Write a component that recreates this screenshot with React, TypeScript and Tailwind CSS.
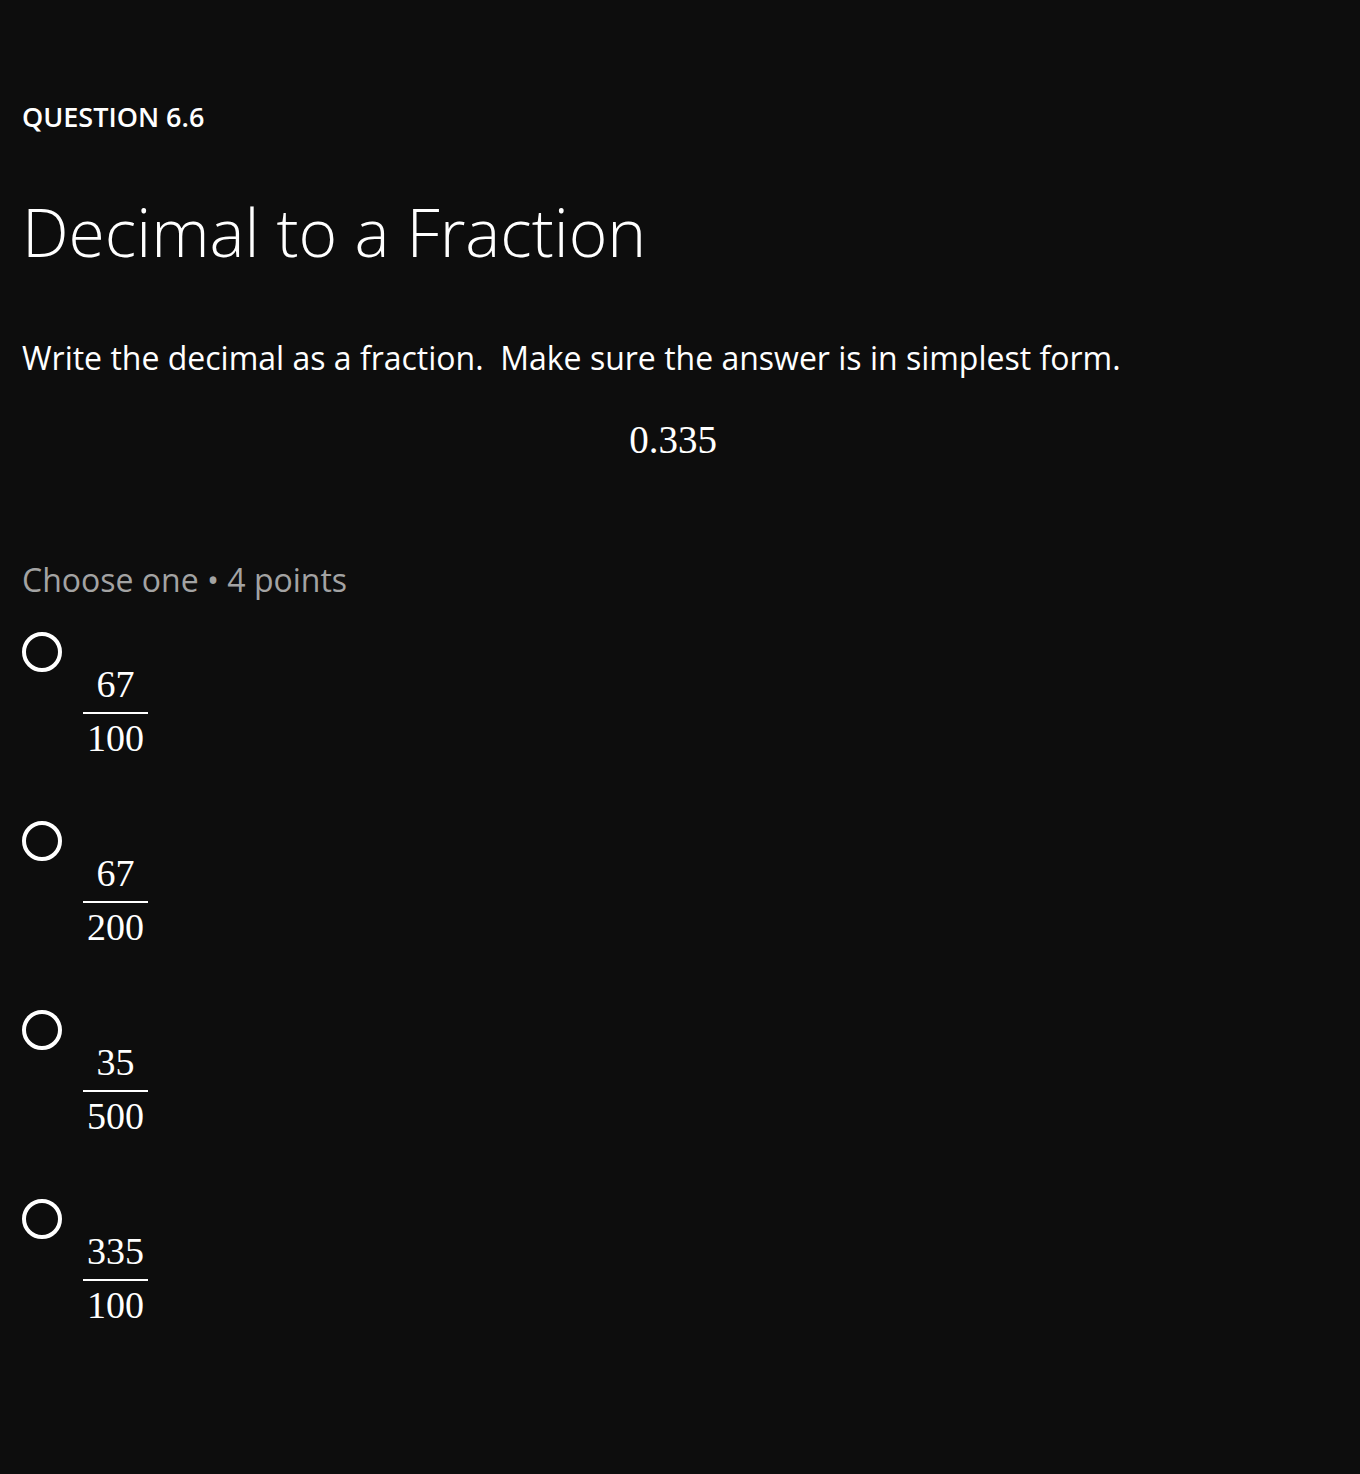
import React from 'react';

const OPTIONS = [
  { num: '67', den: '100' },
  { num: '67', den: '200' },
  { num: '35', den: '500' },
  { num: '335', den: '100' },
];

const SANS = "font-['Open_Sans',sans-serif]";
const MATH = "font-['Liberation_Serif',serif]";

function Fraction({ num, den }: { num: string; den: string }) {
  return (
    <div className={`mt-[33px] inline-flex flex-col items-center text-[38px] leading-[38px] text-white ${MATH}`}>
      <div>{num}</div>
      <div className="mt-[9px] mb-[5px] h-[2px] w-[65px] bg-white" />
      <div>{den}</div>
    </div>
  );
}

export default function App() {
  return (
    <div className={`min-h-[1474px] w-full bg-[#0d0d0d] px-[22px] pt-[99px] text-white ${SANS}`}>
      <div className="text-[27px] leading-[36px] font-semibold">QUESTION 6.6</div>

      <h1 className="mt-[56px] text-[66px] leading-[80px] font-light">Decimal to a Fraction</h1>

      <p className="mt-[65px] text-[32px] leading-[44px] whitespace-pre">
        {'Write the decimal as a fraction.  Make sure the answer is in simplest form.'}
      </p>

      <div className={`mt-[36px] pr-[14px] text-center text-[39px] leading-[48px] ${MATH}`}>0.335</div>

      <div className="mt-[96px] text-[32px] leading-[40px] text-[#a3a3a3]">Choose one • 4 points</div>

      {/* Options */}
      <div className="mt-[32px] flex flex-col gap-[64px]">
        {OPTIONS.map((o, i) => (
          <div key={i} className="flex items-start gap-[21px]">
            <div className="h-[40px] w-[40px] shrink-0 rounded-full border-4 border-white" />
            <Fraction num={o.num} den={o.den} />
          </div>
        ))}
      </div>
    </div>
  );
}
